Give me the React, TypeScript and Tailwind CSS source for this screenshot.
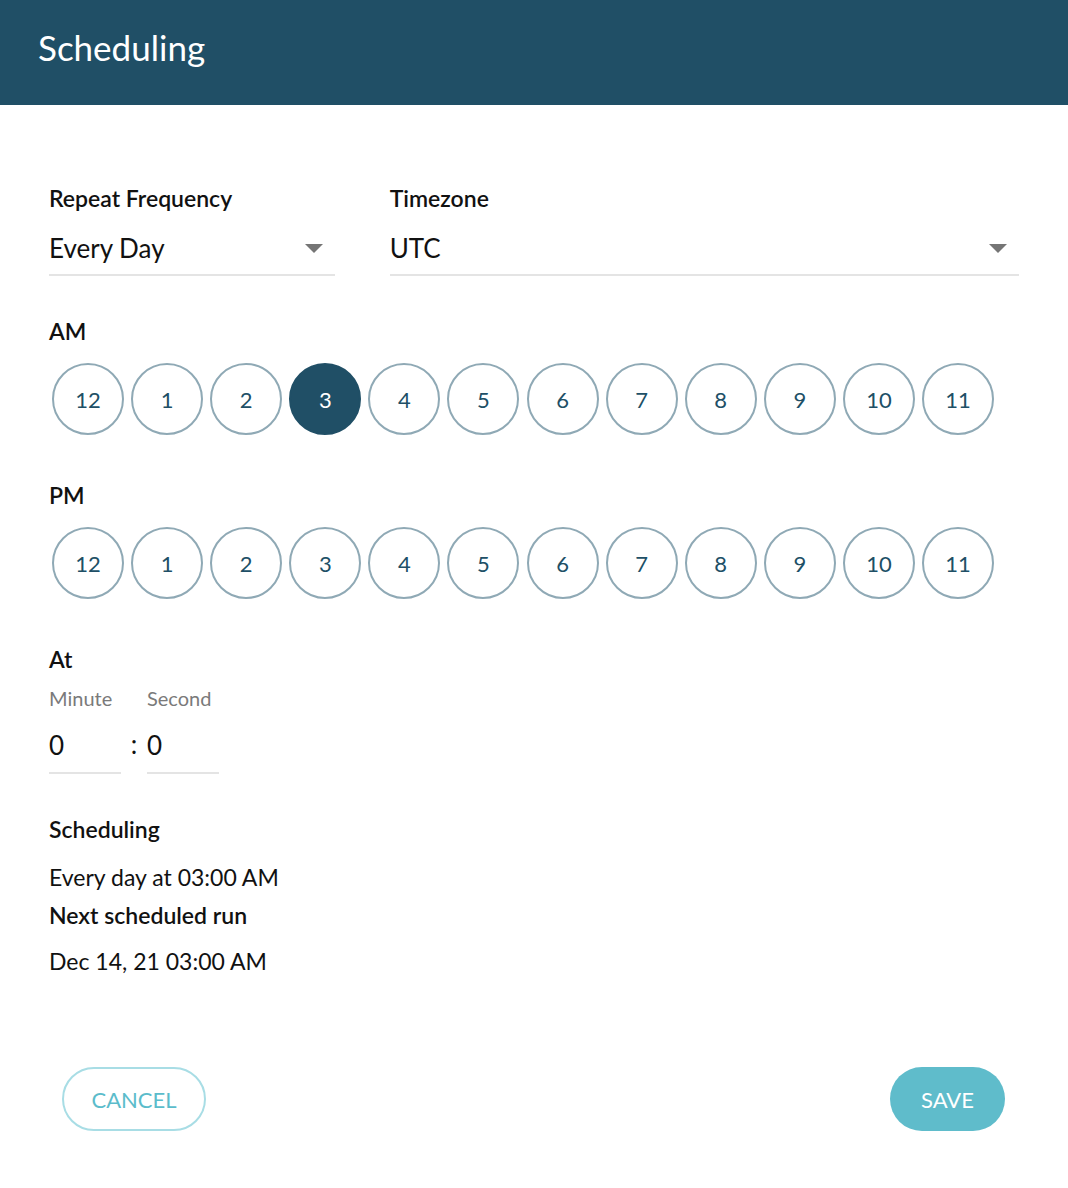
import { useState } from 'react';

const hours = [12, 1, 2, 3, 4, 5, 6, 7, 8, 9, 10, 11];

const Caret = () => (
  <svg width="18" height="9" viewBox="0 0 18 9" className="shrink-0">
    <path d="M0 0 L18 0 L9 9 Z" fill="#757575" />
  </svg>
);

const HourRow = ({ selected, onPick }: { selected: number | null; onPick: (h: number) => void }) => (
  <div className="flex gap-[7.1px] pl-[3px]">
    {hours.map(h => (
      <button
        key={h}
        onClick={() => onPick(h)}
        className={
          h === selected
            ? 'w-[72px] h-[72px] rounded-full bg-[#204f66] border-2 border-[#204f66] text-white text-[22px] flex items-center justify-center'
            : 'w-[72px] h-[72px] rounded-full bg-white border-2 border-[#8fa9b5] text-[#204f66] text-[22px] flex items-center justify-center'
        }
      >
        {h}
      </button>
    ))}
  </div>
);

export default function App() {
  const [am, setAm] = useState<number | null>(3);
  const [pm, setPm] = useState<number | null>(null);

  return (
    <div className="w-[1068px] h-[1188px] bg-white text-[#111] font-['Lato','Open_Sans',sans-serif]">
      {/* Header */}
      <div className="h-[105px] bg-[#204f66] flex items-center pl-[38px]">
        <h1 className="text-white text-[35px] leading-none pb-[10px]">Scheduling</h1>
      </div>

      <div className="px-[49px]">
        {/* Frequency + timezone */}
        <div className="flex gap-[55px] pt-[80px]">
          <div className="w-[286px]">
            <div className="text-[23px] font-semibold leading-[26px]">Repeat Frequency</div>
            <div className="flex items-center justify-between h-[53px] border-b-2 border-[#e4e4e4] pr-[12px] mt-[12px]">
              <span className="text-[26px]">Every Day</span>
              <Caret />
            </div>
          </div>
          <div className="w-[630px]">
            <div className="text-[23px] font-semibold leading-[26px]">Timezone</div>
            <div className="flex items-center justify-between h-[53px] border-b-2 border-[#e4e4e4] pr-[12px] mt-[12px]">
              <span className="text-[26px]">UTC</span>
              <Caret />
            </div>
          </div>
        </div>

        {/* AM */}
        <div className="mt-[42px] text-[23px] font-semibold leading-[26px]">AM</div>
        <div className="mt-[19px]">
          <HourRow selected={am} onPick={h => { setAm(h); setPm(null); }} />
        </div>

        {/* PM */}
        <div className="mt-[47px] text-[23px] font-semibold leading-[26px]">PM</div>
        <div className="mt-[19px]">
          <HourRow selected={pm} onPick={h => { setPm(h); setAm(null); }} />
        </div>

        {/* At */}
        <div className="mt-[47px] text-[23px] font-semibold leading-[26px]">At</div>
        <div className="flex mt-[14px]">
          <div className="w-[72px]">
            <div className="text-[20px] text-[#7a7a7a] leading-[24px]">Minute</div>
            <div className="text-[26px] h-[56px] flex items-center border-b-2 border-[#e4e4e4] mt-[8px]">0</div>
          </div>
          <div className="w-[26px] text-[26px] h-[56px] mt-[32px] flex items-center justify-center pb-[4px]">:</div>
          <div className="w-[72px]">
            <div className="text-[20px] text-[#7a7a7a] leading-[24px] whitespace-nowrap">Second</div>
            <div className="text-[26px] h-[56px] flex items-center border-b-2 border-[#e4e4e4] mt-[8px]">0</div>
          </div>
        </div>

        {/* Summary */}
        <div className="mt-[42px] text-[23px] font-semibold leading-[26px]">Scheduling</div>
        <div className="mt-[22px] text-[23px] leading-[26px]">Every day at 03:00 AM</div>
        <div className="mt-[12px] text-[23px] font-semibold leading-[26px]">Next scheduled run</div>
        <div className="mt-[20px] text-[23px] leading-[26px]">Dec 14, 21 03:00 AM</div>
      </div>

      {/* Actions */}
      <div className="flex justify-between pl-[62px] pr-[63px] mt-[93px]">
        <button className="w-[144px] h-[64px] rounded-full border-2 border-[#a8dde5] text-[#5bbccb] text-[22px]">
          CANCEL
        </button>
        <button className="w-[115px] h-[64px] rounded-full bg-[#5fbccb] text-white text-[22px]">
          SAVE
        </button>
      </div>
    </div>
  );
}
